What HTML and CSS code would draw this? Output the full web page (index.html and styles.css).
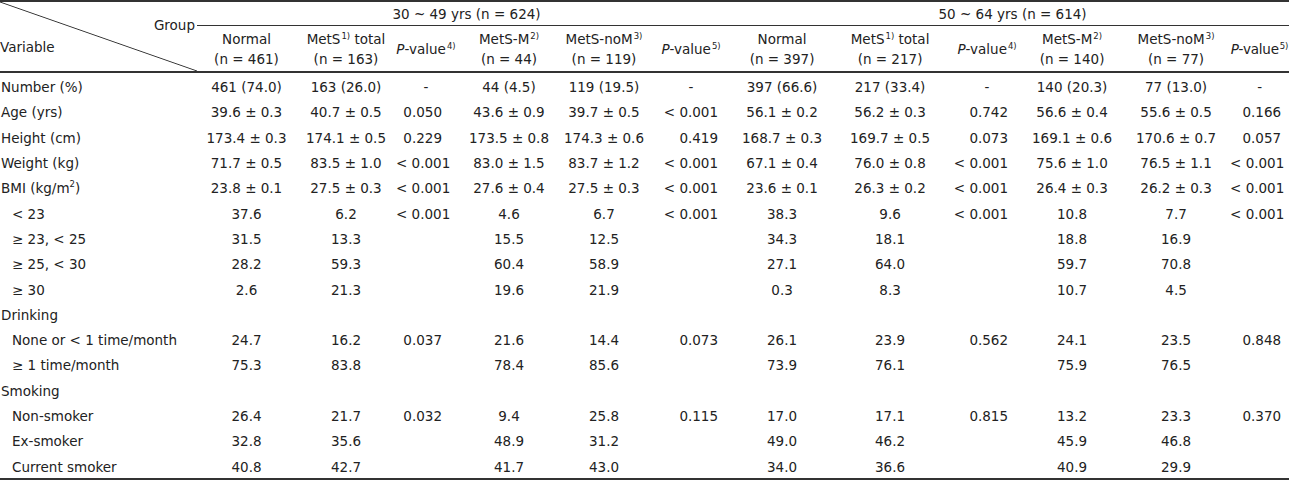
FILE: index.html
```html
<!DOCTYPE html>
<html>
<head>
<meta charset="utf-8">
<link rel="stylesheet" href="styles.css">
</head>
<body>
<table class="stats">
  <colgroup>
    <col class="c-var"><col class="c-n1"><col class="c-m1"><col class="c-p41"><col class="c-mm1"><col class="c-mn1"><col class="c-p51">
    <col class="c-n2"><col class="c-m2"><col class="c-p42"><col class="c-mm2"><col class="c-mn2"><col class="c-p52">
  </colgroup>
  <thead>
    <tr class="h1">
      <th rowspan="2" class="diag">
        <div class="diag-in">
          <span class="grp">Group</span>
          <span class="varlbl">Variable</span>
        </div>
      </th>
      <th colspan="6" class="group">30 ~ 49 yrs (n = 624)</th>
      <th colspan="6" class="group">50 ~ 64 yrs (n = 614)</th>
    </tr>
    <tr class="h2">
      <th>Normal<br>(n = 461)</th>
      <th>MetS<sup>1)</sup> total<br>(n = 163)</th>
      <th class="ph"><i>P</i>-value<sup>4)</sup></th>
      <th>MetS-M<sup>2)</sup><br>(n = 44)</th>
      <th>MetS-noM<sup>3)</sup><br>(n = 119)</th>
      <th class="ph"><i>P</i>-value<sup>5)</sup></th>
      <th>Normal<br>(n = 397)</th>
      <th>MetS<sup>1)</sup> total<br>(n = 217)</th>
      <th class="ph"><i>P</i>-value<sup>4)</sup></th>
      <th>MetS-M<sup>2)</sup><br>(n = 140)</th>
      <th>MetS-noM<sup>3)</sup><br>(n = 77)</th>
      <th class="ph ph-last"><i>P</i>-value<sup>5)</sup></th>
    </tr>
  </thead>
  <tbody>
    <tr><td class="lbl">Number (%)</td><td>461 (74.0)</td><td>163 (26.0)</td><td class="p dash">-</td><td>44 (4.5)</td><td>119 (19.5)</td><td class="p dash">-</td><td>397 (66.6)</td><td>217 (33.4)</td><td class="p dash">-</td><td>140 (20.3)</td><td>77 (13.0)</td><td class="p dash">-</td></tr>
    <tr><td class="lbl">Age (yrs)</td><td>39.6 ± 0.3</td><td>40.7 ± 0.5</td><td class="p">0.050</td><td>43.6 ± 0.9</td><td>39.7 ± 0.5</td><td class="p">&lt; 0.001</td><td>56.1 ± 0.2</td><td>56.2 ± 0.3</td><td class="p">0.742</td><td>56.6 ± 0.4</td><td>55.6 ± 0.5</td><td class="p">0.166</td></tr>
    <tr><td class="lbl">Height (cm)</td><td>173.4 ± 0.3</td><td>174.1 ± 0.5</td><td class="p">0.229</td><td>173.5 ± 0.8</td><td>174.3 ± 0.6</td><td class="p">0.419</td><td>168.7 ± 0.3</td><td>169.7 ± 0.5</td><td class="p">0.073</td><td>169.1 ± 0.6</td><td>170.6 ± 0.7</td><td class="p">0.057</td></tr>
    <tr><td class="lbl">Weight (kg)</td><td>71.7 ± 0.5</td><td>83.5 ± 1.0</td><td class="p">&lt; 0.001</td><td>83.0 ± 1.5</td><td>83.7 ± 1.2</td><td class="p">&lt; 0.001</td><td>67.1 ± 0.4</td><td>76.0 ± 0.8</td><td class="p">&lt; 0.001</td><td>75.6 ± 1.0</td><td>76.5 ± 1.1</td><td class="p">&lt; 0.001</td></tr>
    <tr><td class="lbl">BMI (kg/m<sup class="sq">2</sup>)</td><td>23.8 ± 0.1</td><td>27.5 ± 0.3</td><td class="p">&lt; 0.001</td><td>27.6 ± 0.4</td><td>27.5 ± 0.3</td><td class="p">&lt; 0.001</td><td>23.6 ± 0.1</td><td>26.3 ± 0.2</td><td class="p">&lt; 0.001</td><td>26.4 ± 0.3</td><td>26.2 ± 0.3</td><td class="p">&lt; 0.001</td></tr>
    <tr><td class="lbl sub">&lt; 23</td><td>37.6</td><td>6.2</td><td class="p">&lt; 0.001</td><td>4.6</td><td>6.7</td><td class="p">&lt; 0.001</td><td>38.3</td><td>9.6</td><td class="p">&lt; 0.001</td><td>10.8</td><td>7.7</td><td class="p">&lt; 0.001</td></tr>
    <tr><td class="lbl sub">≥ 23, &lt; 25</td><td>31.5</td><td>13.3</td><td class="p"></td><td>15.5</td><td>12.5</td><td class="p"></td><td>34.3</td><td>18.1</td><td class="p"></td><td>18.8</td><td>16.9</td><td class="p"></td></tr>
    <tr><td class="lbl sub">≥ 25, &lt; 30</td><td>28.2</td><td>59.3</td><td class="p"></td><td>60.4</td><td>58.9</td><td class="p"></td><td>27.1</td><td>64.0</td><td class="p"></td><td>59.7</td><td>70.8</td><td class="p"></td></tr>
    <tr><td class="lbl sub">≥ 30</td><td>2.6</td><td>21.3</td><td class="p"></td><td>19.6</td><td>21.9</td><td class="p"></td><td>0.3</td><td>8.3</td><td class="p"></td><td>10.7</td><td>4.5</td><td class="p"></td></tr>
    <tr><td class="lbl">Drinking</td><td></td><td></td><td class="p"></td><td></td><td></td><td class="p"></td><td></td><td></td><td class="p"></td><td></td><td></td><td class="p"></td></tr>
    <tr><td class="lbl sub">None or &lt; 1 time/month</td><td>24.7</td><td>16.2</td><td class="p">0.037</td><td>21.6</td><td>14.4</td><td class="p">0.073</td><td>26.1</td><td>23.9</td><td class="p">0.562</td><td>24.1</td><td>23.5</td><td class="p">0.848</td></tr>
    <tr><td class="lbl sub">≥ 1 time/month</td><td>75.3</td><td>83.8</td><td class="p"></td><td>78.4</td><td>85.6</td><td class="p"></td><td>73.9</td><td>76.1</td><td class="p"></td><td>75.9</td><td>76.5</td><td class="p"></td></tr>
    <tr><td class="lbl">Smoking</td><td></td><td></td><td class="p"></td><td></td><td></td><td class="p"></td><td></td><td></td><td class="p"></td><td></td><td></td><td class="p"></td></tr>
    <tr><td class="lbl sub">Non-smoker</td><td>26.4</td><td>21.7</td><td class="p">0.032</td><td>9.4</td><td>25.8</td><td class="p">0.115</td><td>17.0</td><td>17.1</td><td class="p">0.815</td><td>13.2</td><td>23.3</td><td class="p">0.370</td></tr>
    <tr><td class="lbl sub">Ex-smoker</td><td>32.8</td><td>35.6</td><td class="p"></td><td>48.9</td><td>31.2</td><td class="p"></td><td>49.0</td><td>46.2</td><td class="p"></td><td>45.9</td><td>46.8</td><td class="p"></td></tr>
    <tr class="last"><td class="lbl sub">Current smoker</td><td>40.8</td><td>42.7</td><td class="p"></td><td>41.7</td><td>43.0</td><td class="p"></td><td>34.0</td><td>36.6</td><td class="p"></td><td>40.9</td><td>29.9</td><td class="p"></td></tr>
  </tbody>
</table>
</body>
</html>
```

FILE: styles.css
```css
html, body {
  margin: 0;
  padding: 0;
  background: #ffffff;
}

.stats {
  width: 1289px;
  table-layout: fixed;
  border-collapse: separate;
  border-spacing: 0;
  font-family: "DejaVu Sans", "Liberation Sans", sans-serif;
  font-size: 13.5px;
  color: #222;
  line-height: 16px;
}

.c-var { width: 197px; }
.c-n1 { width: 99px; }
.c-m1 { width: 100px; }
.c-p41 { width: 60px; }
.c-mm1 { width: 106px; }
.c-mn1 { width: 84px; }
.c-p51 { width: 90px; }
.c-n2 { width: 92px; }
.c-m2 { width: 124px; }
.c-p42 { width: 70px; }
.c-mm2 { width: 100px; }
.c-mn2 { width: 108px; }
.c-p52 { width: 59px; }

.stats th,
.stats td {
  box-sizing: border-box;
  padding: 0;
  white-space: nowrap;
  font-weight: normal;
  text-align: center;
  vertical-align: middle;
  overflow: visible;
}

.stats sup {
  font-size: 8.5px;
  line-height: 0;
  vertical-align: 5px;
  margin-left: 1px;
}

.stats sup.sq {
  margin-left: 0;
  vertical-align: 6px;
}

.h1 th {
  border-top: 2px solid #333;
  height: 26px;
}

.h1 th.group {
  border-bottom: 1px solid #333;
  padding-top: 1px;
}

.h2 th {
  height: 47px;
  border-bottom: 2px solid #333;
  line-height: 20px;
  padding-top: 1px;
}

.h2 th.ph {
  line-height: 16px;
}

.h2 th.ph-last {
  text-align: right;
  padding-right: 1px;
  letter-spacing: -0.2px;
}

.stats th.diag {
  border-bottom: 2px solid #333;
  vertical-align: top;
  text-align: left;
  background-image: linear-gradient(to top right, transparent calc(50% - 0.9px), #333 50%, transparent calc(50% + 0.9px));
}

.diag-in {
  display: flex;
  flex-direction: column;
  padding-top: 15px;
}

.grp {
  align-self: flex-end;
  padding-right: 2px;
}

.varlbl {
  align-self: flex-start;
  margin-top: 6px;
}

.stats tbody td {
  height: 25.3px;
  padding-top: 3px;
}

.stats tbody tr.last td {
  height: 27.3px;
  border-bottom: 2px solid #333;
}

.stats td.lbl {
  text-align: left;
  padding-left: 1px;
}

.stats td.lbl.sub {
  padding-left: 12px;
}

.stats td.p {
  text-align: right;
}

.stats tbody td:nth-child(4).p { padding-right: 14px; }
.stats tbody td:nth-child(7).p { padding-right: 18px; }
.stats tbody td:nth-child(10).p { padding-right: 14px; }
.stats tbody td:nth-child(13).p { padding-right: 8px; }

.stats tbody td:nth-child(4).p.dash,
.stats tbody td:nth-child(7).p.dash,
.stats tbody td:nth-child(10).p.dash,
.stats tbody td:nth-child(13).p.dash {
  text-align: center;
  padding-right: 0;
}
```
